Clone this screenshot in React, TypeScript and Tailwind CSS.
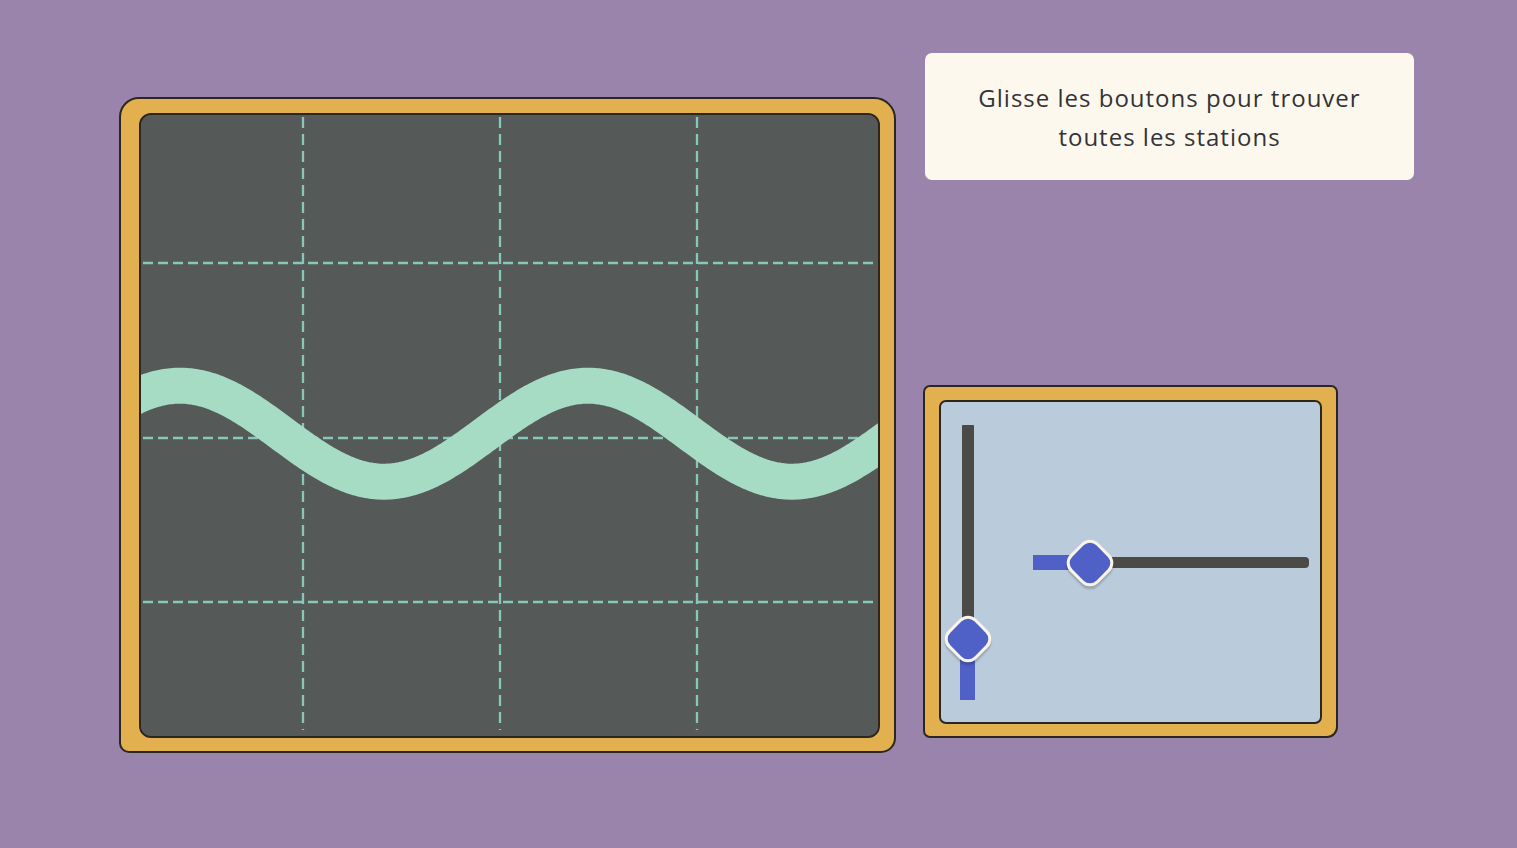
import React from "react";

function wavePath(): string {
  const pts: string[] = [];
  for (let x = 120; x <= 900; x += 2) {
    const y = 433.7 - 48 * Math.cos((2 * Math.PI * (x - 180)) / 408);
    pts.push(`${x === 120 ? "M" : "L"}${x},${y.toFixed(2)}`);
  }
  return pts.join(" ");
}

function Screen() {
  const grid = "#88c8b8";
  return (
    <svg width="737" height="621" viewBox="141 115 737 621" className="block">
      <rect x="141" y="115" width="737" height="621" fill="#555a58" />
      {[303, 500, 697].map((x) => (
        <line key={"v" + x} x1={x} y1={117} x2={x} y2={730} stroke={grid} strokeWidth={2.3} strokeDasharray="11 6" />
      ))}
      {[263, 438, 602].map((y) => (
        <line key={"h" + y} x1={143} y1={y} x2={876} y2={y} stroke={grid} strokeWidth={2.3} strokeDasharray="10 5" />
      ))}
      <path d={wavePath()} fill="none" stroke="#a6dcc4" strokeWidth={36} />
    </svg>
  );
}

function Knob() {
  return (
    <div className="absolute left-1/2 top-1/2 -translate-x-1/2 -translate-y-1/2 rotate-45 w-[40px] h-[40px] rounded-[12px] bg-[#4f60c6] border-[3px] border-[#f8f4e8] shadow-[2px_2px_2px_rgba(0,0,0,0.18)]" />
  );
}

export default function App() {
  return (
    <div className="w-[1517px] h-[848px] bg-[#9a84ab] flex items-start pl-[119px] overflow-hidden" style={{ fontFamily: "'Open Sans', Lato, sans-serif" }}>
      {/* Oscilloscope */}
      <div className="mt-[97px] w-[777px] h-[656px] bg-[#e3b04f] border-2 border-[#2a2722] rounded-tl-[20px] rounded-tr-[22px] rounded-bl-[10px] rounded-br-[15px] pt-[14px] pl-[18px]">
        <div className="w-[741px] h-[625px] border-2 border-[#2a2722] rounded-[12px] overflow-hidden bg-[#555a58]">
          <Screen />
        </div>
      </div>

      {/* Right column */}
      <div className="ml-[27px] mt-[53px] flex flex-col items-start">
        <div className="ml-[2px] w-[489px] h-[127px] bg-[#fdf8ee] rounded-[7px] flex items-center justify-center text-center text-[24px] font-medium tracking-[1px] leading-[39px] text-[#333337] pt-[1px]">
          <div>
            Glisse les boutons pour trouver
            <br />
            toutes les stations
          </div>
        </div>

        <div className="mt-[205px] w-[415px] h-[353px] bg-[#e3b04f] border-2 border-[#2a2722] rounded-[7px] rounded-br-[11px] pt-[13px] pl-[14px]">
          <div className="w-[383px] h-[324px] bg-[#bacbdb] border-2 border-[#2a2722] rounded-[7px] flex items-start">
            {/* vertical slider */}
            <div className="relative ml-[19px] mt-[23px] w-[15px] flex flex-col items-center">
              <div className="w-[12px] h-[214px] bg-[#4b4a47] rounded-t-[1px]" />
              <div className="w-[15px] h-[61px] bg-[#4f60c6]" />
              <div className="absolute left-1/2 top-[214px] w-0 h-0">
                <Knob />
              </div>
            </div>
            {/* horizontal slider */}
            <div className="relative ml-[58px] mt-[153px] h-[15px] flex items-center">
              <div className="w-[57px] h-[15px] bg-[#4f60c6]" />
              <div className="w-[219px] h-[11px] bg-[#4b4a47] rounded-r-[4px]" />
              <div className="absolute left-[57px] top-1/2 w-0 h-0">
                <Knob />
              </div>
            </div>
          </div>
        </div>
      </div>
    </div>
  );
}
